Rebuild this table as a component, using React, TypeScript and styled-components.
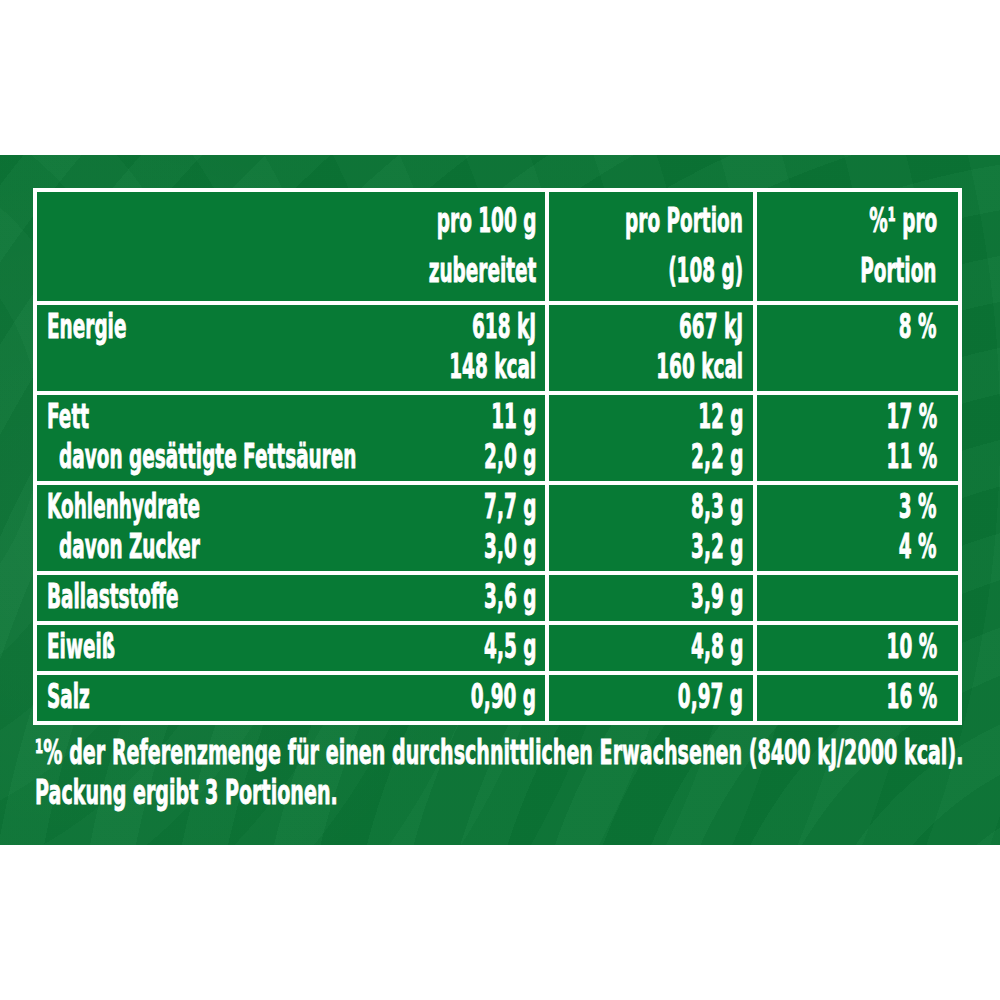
import React from "react";
import styled, { createGlobalStyle } from "styled-components";

const SCALE = 0.543;

const GlobalStyle = createGlobalStyle`
  html, body {
    margin: 0;
    padding: 0;
    background: #ffffff;
    overflow: hidden;
  }
  body {
    font-family: "DejaVu Sans", "Liberation Sans", sans-serif;
    font-weight: 700;
    color: #ffffff;
  }
`;

const Page = styled.div`
  width: 1000px;
  height: 1000px;
  padding-top: 155px;
  box-sizing: border-box;
  background: #ffffff;
`;

const Panel = styled.section`
  height: 690px;
  box-sizing: border-box;
  padding: 33px 0 0 33px;
  overflow: hidden;
  display: flex;
  flex-direction: column;
  align-items: flex-start;
  background:
    radial-gradient(ellipse 60% 90% at 8% 55%, rgba(255, 255, 255, 0.03), transparent 70%),
    repeating-radial-gradient(circle at 115% 130%, rgba(0, 0, 0, 0.025) 0 45px, rgba(255, 255, 255, 0.018) 45px 90px),
    repeating-radial-gradient(circle at -20% 40%, rgba(255, 255, 255, 0.015) 0 60px, rgba(0, 0, 0, 0.015) 60px 120px),
    #0b7535;
`;

const Table = styled.div`
  display: grid;
  grid-template-columns: 508px 204px 201px;
  gap: 4px;
  padding: 4px;
  background: #ffffff;
  width: max-content;
`;

const Cell = styled.div<{ $head?: boolean; $pr?: number }>`
  background: #077a35;
  display: flex;
  justify-content: flex-end;
  box-sizing: border-box;
  padding: ${(p) => (p.$head ? "3px" : "1px")} ${(p) => p.$pr ?? 10}px
    ${(p) => (p.$head ? "6px" : "5px")} 10px;
  line-height: ${(p) => (p.$head ? "50px" : "40px")};
  font-size: 34px;
  min-width: 0;
`;

const LabelGroup = styled.div`
  flex: 1 1 0;
  min-width: 0;
  display: flex;
  flex-direction: column;
  align-items: flex-start;
`;

const ValueGroup = styled.div`
  flex: 0 0 auto;
  display: flex;
  flex-direction: column;
  align-items: flex-end;
`;

const T = styled.span<{ $right?: boolean; $indent?: boolean; $scale?: number }>`
  display: inline-block;
  white-space: nowrap;
  transform: scaleX(${(p) => p.$scale ?? SCALE});
  transform-origin: ${(p) => (p.$right ? "right" : "left")} center;
  margin-left: ${(p) => (p.$indent ? "12px" : "0")};
  -webkit-text-stroke: 0.9px #ffffff;
`;

const Footnote = styled.div`
  margin: 7px 0 0 2px;
  display: flex;
  flex-direction: column;
  align-items: flex-start;
  font-size: 34px;
  line-height: 40px;
`;

type Label = { text: string; indent?: boolean };
type Row = { label: Label[]; v1: string[]; v2: string[]; v3: string[] };

const rows: Row[] = [
  {
    label: [{ text: "Energie" }],
    v1: ["618 kJ", "148 kcal"],
    v2: ["667 kJ", "160 kcal"],
    v3: ["8 %"],
  },
  {
    label: [{ text: "Fett" }, { text: "davon gesättigte Fettsäuren", indent: true }],
    v1: ["11 g", "2,0 g"],
    v2: ["12 g", "2,2 g"],
    v3: ["17 %", "11 %"],
  },
  {
    label: [{ text: "Kohlenhydrate" }, { text: "davon Zucker", indent: true }],
    v1: ["7,7 g", "3,0 g"],
    v2: ["8,3 g", "3,2 g"],
    v3: ["3 %", "4 %"],
  },
  { label: [{ text: "Ballaststoffe" }], v1: ["3,6 g"], v2: ["3,9 g"], v3: [] },
  { label: [{ text: "Eiweiß" }], v1: ["4,5 g"], v2: ["4,8 g"], v3: ["10 %"] },
  { label: [{ text: "Salz" }], v1: ["0,90 g"], v2: ["0,97 g"], v3: ["16 %"] },
];

const Values: React.FC<{ lines: string[] }> = ({ lines }) => (
  <ValueGroup>
    {lines.map((l, i) => (
      <T key={i} $right>
        {l}
      </T>
    ))}
  </ValueGroup>
);

export default function App() {
  return (
    <>
      <GlobalStyle />
      <Page>
        <Panel>
          <Table>
            <Cell $head $pr={9}>
              <LabelGroup />
              <Values lines={["pro 100 g", "zubereitet"]} />
            </Cell>
            <Cell $head>
              <Values lines={["pro Portion", "(108 g)"]} />
            </Cell>
            <Cell $head $pr={21}>
              <Values lines={["%¹ pro", "Portion"]} />
            </Cell>
            {rows.map((r, i) => (
              <React.Fragment key={i}>
                <Cell $pr={9}>
                  <LabelGroup>
                    {r.label.map((l, j) => (
                      <T key={j} $indent={l.indent}>
                        {l.text}
                      </T>
                    ))}
                  </LabelGroup>
                  <Values lines={r.v1} />
                </Cell>
                <Cell>
                  <Values lines={r.v2} />
                </Cell>
                <Cell $pr={21}>
                  <Values lines={r.v3} />
                </Cell>
              </React.Fragment>
            ))}
          </Table>
          <Footnote>
            <T $scale={0.562}>¹% der Referenzmenge für einen durchschnittlichen Erwachsenen (8400 kJ/2000 kcal).</T>
            <T $scale={0.562}>Packung ergibt 3 Portionen.</T>
          </Footnote>
        </Panel>
      </Page>
    </>
  );
}
